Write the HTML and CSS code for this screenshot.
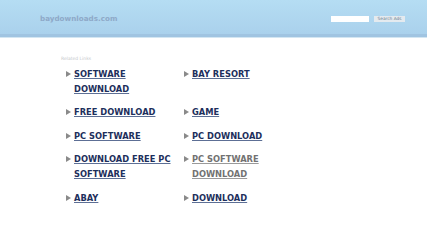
FILE: index.html
```html
<!DOCTYPE html>
<html>
<head>
<meta charset="utf-8">
<link rel="stylesheet" href="styles.css">
</head>
<body>
<div class="page">
  <header class="header">
    <div class="brand">baydownloads.com</div>
    <form class="search">
      <input class="search-input" type="text">
      <button class="search-btn" type="button">Search Ads</button>
    </form>
  </header>
  <main class="content">
    <div class="related">Related Links</div>
    <ul class="links">
      <li class="item"><span class="arrow"></span><a class="link">SOFTWARE DOWNLOAD</a></li>
      <li class="item"><span class="arrow"></span><a class="link">BAY RESORT</a></li>
      <li class="item"><span class="arrow"></span><a class="link">FREE DOWNLOAD</a></li>
      <li class="item"><span class="arrow"></span><a class="link">GAME</a></li>
      <li class="item"><span class="arrow"></span><a class="link">PC SOFTWARE</a></li>
      <li class="item"><span class="arrow"></span><a class="link">PC DOWNLOAD</a></li>
      <li class="item"><span class="arrow"></span><a class="link">DOWNLOAD FREE PC SOFTWARE</a></li>
      <li class="item"><span class="arrow"></span><a class="link visited">PC SOFTWARE DOWNLOAD</a></li>
      <li class="item"><span class="arrow"></span><a class="link">ABAY</a></li>
      <li class="item"><span class="arrow"></span><a class="link">DOWNLOAD</a></li>
    </ul>
  </main>
</div>
</body>
</html>
```
FILE: styles.css
```css
html, body {
  margin: 0;
  padding: 0;
  background: #ffffff;
}
body {
  font-family: "DejaVu Sans", Verdana, sans-serif;
}
.page {
  width: 427px;
}
.header {
  height: 34px;
  background: linear-gradient(to bottom, #b5ddf3 0%, #aad1ec 100%);
  border-bottom: 3px solid #a0c4e1;
  box-shadow: 0 1px 0 #d3e6f2;
  display: flex;
  align-items: center;
  justify-content: space-between;
  padding: 0 22px 0 40px;
}
.brand {
  font-size: 7.2px;
  font-weight: bold;
  color: #8ea9c8;
  margin-top: 3px;
}
.search {
  display: flex;
  align-items: center;
  gap: 5px;
  margin: 3px 0 0 0;
}
.search-input {
  width: 38px;
  height: 6px;
  padding: 0;
  border: none;
  background: #ffffff;
  box-sizing: border-box;
}
.search-btn {
  width: 31px;
  height: 6px;
  padding: 0;
  border: none;
  background: #e4eaef;
  color: #6f7f8f;
  font-family: "DejaVu Sans", sans-serif;
  font-size: 4.3px;
  line-height: 6px;
}
.content {
  padding: 19px 0 0 61px;
}
.related {
  font-size: 4.5px;
  line-height: 6px;
  color: #c6c9cc;
}
.links {
  list-style: none;
  margin: 5px 0 0 5px;
  padding: 0;
  display: grid;
  grid-template-columns: 118px 118px;
  row-gap: 8.4px;
}
.item {
  display: flex;
  align-items: flex-start;
  gap: 3px;
}
.arrow {
  flex: none;
  width: 0;
  height: 0;
  margin-top: 4px;
  border-top: 3.5px solid transparent;
  border-bottom: 3.5px solid transparent;
  border-left: 5px solid #8a8a8a;
}
.link {
  max-width: 100px;
  font-size: 8.3px;
  font-weight: bold;
  line-height: 15px;
  color: #1d2f5c;
  text-decoration: underline;
  text-decoration-color: #5d6f95;
  text-underline-offset: 1px;
  cursor: pointer;
}
.link.visited {
  color: #727272;
  text-decoration-color: #9a9a9a;
}
```
